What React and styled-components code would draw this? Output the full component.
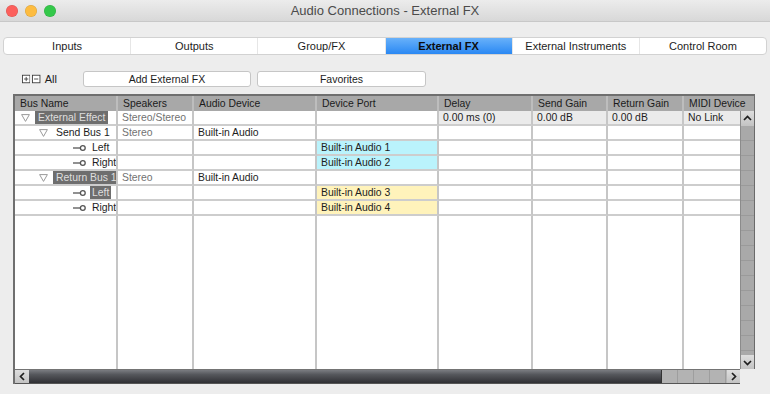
import React from 'react';
import styled, { createGlobalStyle, css } from 'styled-components';

const GlobalStyle = createGlobalStyle`
  html, body {
    margin: 0;
    padding: 0;
  }
  body {
    width: 770px;
    height: 394px;
    overflow: hidden;
    background: #ececec;
    font-family: "Liberation Sans", Arial, Helvetica, sans-serif;
  }
`;

const COLS = [103, 76, 123, 122, 94, 75, 76, 56];
const HEAD_COLS = [103, 76, 123, 122, 94, 75, 76, 71];

const Window = styled.div`
  width: 770px;
  height: 394px;
  display: flex;
  flex-direction: column;
  background: #ededed;
`;

const TitleBar = styled.div`
  height: 22px;
  flex: none;
  box-sizing: border-box;
  display: grid;
  grid-template-columns: 1fr auto 1fr;
  align-items: center;
  background: linear-gradient(#ececec, #d8d8d8);
  border-bottom: 1px solid #c8c8c8;
`;

const Lights = styled.div`
  display: flex;
  gap: 7px;
  padding-left: 6px;
`;

const Light = styled.span`
  width: 12px;
  height: 12px;
  border-radius: 50%;
  background: ${(p) => p.$color};
  box-shadow: inset 0 0 0 0.5px rgba(0, 0, 0, 0.15);
`;

const Title = styled.div`
  font-size: 13px;
  color: #4b4b4b;
`;

const Content = styled.div`
  display: flex;
  flex-direction: column;
  padding: 15px 3px 0;
`;

const Tabs = styled.div`
  display: flex;
  height: 18px;
  box-sizing: border-box;
  background: #fff;
  border: 1px solid #d2d2d2;
  border-radius: 4px;
  overflow: hidden;
`;

const Tab = styled.div`
  flex: 1;
  display: flex;
  align-items: center;
  justify-content: center;
  font-size: 11px;
  color: #1d1d1d;
  & + & {
    border-left: 1px solid #e6e6e6;
  }
  ${(p) =>
    p.$active &&
    css`
      background: linear-gradient(#68b1fa, #2a88f3);
      font-weight: bold;
      color: #0d0d0d;
    `}
`;

const Toolbar = styled.div`
  display: flex;
  align-items: center;
  height: 16px;
  margin-top: 16px;
  padding-left: 19px;
`;

const ExpandAll = styled.div`
  display: flex;
  align-items: center;
  gap: 2px;
  width: 35px;
  margin-right: 26px;
  font-size: 11px;
  color: #1d1d1d;
  span {
    margin-left: 2px;
  }
`;

const ToolButton = styled.div`
  width: ${(p) => p.$w}px;
  height: 16px;
  box-sizing: border-box;
  margin-right: 6px;
  display: flex;
  align-items: center;
  justify-content: center;
  background: #fff;
  border: 1px solid #c6c6c6;
  border-radius: 3px;
  font-size: 10.5px;
  color: #1d1d1d;
`;

const Table = styled.div`
  margin: 7px 0 0 10px;
  display: grid;
  grid-template-columns: 725px 15px;
  grid-template-rows: 15px 258px 15px;
  width: max-content;
  border-top: 2px solid #6f6f6f;
  border-left: 2px solid #6f6f6f;
`;

const HeaderRow = styled.div`
  grid-column: 1 / span 2;
  display: grid;
  grid-template-columns: ${HEAD_COLS.map((w) => `${w}px`).join(' ')};
  background: #a8a8a8;
`;

const HeaderCell = styled.div`
  box-sizing: border-box;
  display: flex;
  align-items: center;
  padding-left: 5px;
  font-size: 10.4px;
  color: #1b1b1b;
  white-space: nowrap;
  border-right: 2px solid #bdbdbd;
  &:last-child {
    border-right: 1px solid #6f6f6f;
  }
`;

const Body = styled.div`
  display: grid;
  grid-template-columns: ${COLS.map((w) => `${w}px`).join(' ')};
  grid-template-rows: repeat(7, 15px) 1fr;
  background: #fff;
`;

const tones = {
  send: '#baf3fc',
  ret: '#fff3bb',
  shade: '#ebebeb',
};

const Cell = styled.div`
  box-sizing: border-box;
  display: flex;
  align-items: center;
  padding-left: 4px;
  font-size: 10.4px;
  white-space: nowrap;
  overflow: hidden;
  color: ${(p) => (p.$muted ? '#727272' : '#1d1d1d')};
  background: ${(p) => tones[p.$tone] || '#fff'};
  border-right: 2px solid #c6c6c6;
  border-bottom: 2px solid #cdcdcd;
  &:nth-child(8n) {
    border-right: none;
  }
  svg {
    flex: none;
  }
`;

const Filler = styled.div`
  border-right: 2px solid #c6c6c6;
  &:last-child {
    border-right: none;
  }
`;

const BusCell = styled(Cell)`
  padding-left: ${(p) => p.$indent}px;
  gap: ${(p) => p.$gap}px;
`;

const Label = styled.span`
  flex: none;
  height: 13px;
  line-height: 13px;
  padding: 0 ${(p) => p.$pad}px;
  ${(p) =>
    p.$selected &&
    css`
      background: #6e6e6e;
      color: #dedede;
    `}
`;

const VScroll = styled.div`
  display: flex;
  flex-direction: column;
  box-sizing: border-box;
  border-left: 1px solid #8b8b8b;
  border-right: 1px solid #6a6a6a;
`;

const ScrollButton = styled.div`
  flex: none;
  width: ${(p) => (p.$w ? `${p.$w}px` : 'auto')};
  height: ${(p) => (p.$h ? `${p.$h}px` : 'auto')};
  display: flex;
  align-items: center;
  justify-content: center;
  background: linear-gradient(#dedede, #c3c3c3);
`;

const VTrack = styled.div`
  flex: 1;
  background: repeating-linear-gradient(
    to bottom,
    #a9a9a9 0 14px,
    #9a9a9a 14px 15px
  );
`;

const HScroll = styled.div`
  display: flex;
  box-sizing: border-box;
  border-top: 1px solid #747474;
  border-bottom: 1px solid #555;
`;

const Thumb = styled.div`
  width: 632px;
  flex: none;
  background: linear-gradient(#7a7c81, #55575c 35%, #2f3034);
`;

const HTrack = styled.div`
  flex: 1;
  background: repeating-linear-gradient(
    to right,
    #b3b3b3 0 15px,
    #9e9e9e 15px 16px
  );
  border-left: 1px solid #333;
`;

const Corner = styled.div`
  background: #ededed;
`;

function Chevron({ dir }) {
  const paths = {
    up: 'M2 7 L5.5 3.5 L9 7',
    down: 'M2 4 L5.5 7.5 L9 4',
    left: 'M7 2 L3.5 5.5 L7 9',
    right: 'M4 2 L7.5 5.5 L4 9',
  };
  return (
    <svg width="11" height="11" viewBox="0 0 11 11">
      <path d={paths[dir]} fill="none" stroke="#1e1e1e" strokeWidth="1.7" />
    </svg>
  );
}

function Disclosure() {
  return (
    <svg width="9" height="8" viewBox="0 0 9 8">
      <path d="M0.6 0.6 H8.4 L4.5 7.4 Z" fill="none" stroke="#9a9a9a" strokeWidth="1" />
    </svg>
  );
}

function Connector() {
  return (
    <svg width="13" height="8" viewBox="0 0 13 8">
      <line x1="0" y1="4" x2="7" y2="4" stroke="#555" strokeWidth="1.3" />
      <circle cx="9.8" cy="4" r="2.4" fill="#fff" stroke="#555" strokeWidth="1.3" />
    </svg>
  );
}

function BoxIcon({ plus }) {
  return (
    <svg width="10" height="10" viewBox="0 0 10 10">
      <rect x="0.5" y="0.5" width="9" height="9" fill="#fff" stroke="#333" />
      <line x1="2.5" y1="5" x2="7.5" y2="5" stroke="#333" />
      {plus && <line x1="5" y1="2.5" x2="5" y2="7.5" stroke="#333" />}
    </svg>
  );
}

const TABS = ['Inputs', 'Outputs', 'Group/FX', 'External FX', 'External Instruments', 'Control Room'];
const HEADERS = ['Bus Name', 'Speakers', 'Audio Device', 'Device Port', 'Delay', 'Send Gain', 'Return Gain', 'MIDI Device'];

const ROWS = [
  { indent: 6, kind: 'group', name: 'External Effect', selected: true, speakers: 'Stereo/Stereo', delay: '0.00 ms (0)', send: '0.00 dB', ret: '0.00 dB', midi: 'No Link', shade: true },
  { indent: 24, kind: 'group', name: 'Send Bus 1', speakers: 'Stereo', device: 'Built-in Audio' },
  { indent: 58, kind: 'leaf', name: 'Left', port: 'Built-in Audio 1', tone: 'send' },
  { indent: 58, kind: 'leaf', name: 'Right', port: 'Built-in Audio 2', tone: 'send' },
  { indent: 24, kind: 'group', name: 'Return Bus 1', selected: true, speakers: 'Stereo', device: 'Built-in Audio' },
  { indent: 58, kind: 'leaf', name: 'Left', selected: true, port: 'Built-in Audio 3', tone: 'ret' },
  { indent: 58, kind: 'leaf', name: 'Right', port: 'Built-in Audio 4', tone: 'ret' },
];

export default function App() {
  return (
    <Window>
      <GlobalStyle />
      <TitleBar>
        <Lights>
          <Light $color="#fc605c" />
          <Light $color="#fdbc40" />
          <Light $color="#34c84a" />
        </Lights>
        <Title>Audio Connections - External FX</Title>
        <div />
      </TitleBar>
      <Content>
        <Tabs>
          {TABS.map((t) => (
            <Tab key={t} $active={t === 'External FX'}>
              {t}
            </Tab>
          ))}
        </Tabs>
        <Toolbar>
          <ExpandAll>
            <BoxIcon plus />
            <BoxIcon />
            <span>All</span>
          </ExpandAll>
          <ToolButton $w={168}>Add External FX</ToolButton>
          <ToolButton $w={169}>Favorites</ToolButton>
        </Toolbar>
        <Table>
          <HeaderRow>
            {HEADERS.map((h) => (
              <HeaderCell key={h}>{h}</HeaderCell>
            ))}
          </HeaderRow>
          <Body>
            {ROWS.map((r, i) => {
              const group = r.kind === 'group';
              return (
                <React.Fragment key={i}>
                  <BusCell $indent={r.indent} $gap={group ? 5 : 4}>
                    {group ? <Disclosure /> : <Connector />}
                    <Label $selected={r.selected} $pad={group ? 3 : 2}>
                      {r.name}
                    </Label>
                  </BusCell>
                  <Cell $muted>{r.speakers}</Cell>
                  <Cell>{r.device}</Cell>
                  <Cell $tone={r.tone}>{r.port}</Cell>
                  <Cell $tone={r.shade && 'shade'}>{r.delay}</Cell>
                  <Cell $tone={r.shade && 'shade'}>{r.send}</Cell>
                  <Cell $tone={r.shade && 'shade'}>{r.ret}</Cell>
                  <Cell $tone={r.shade && 'shade'}>{r.midi}</Cell>
                </React.Fragment>
              );
            })}
            {COLS.map((w, i) => (
              <Filler key={`f${i}`} />
            ))}
          </Body>
          <VScroll>
            <ScrollButton $h={15}>
              <Chevron dir="up" />
            </ScrollButton>
            <VTrack />
            <ScrollButton $h={14}>
              <Chevron dir="down" />
            </ScrollButton>
          </VScroll>
          <HScroll>
            <ScrollButton $w={14}>
              <Chevron dir="left" />
            </ScrollButton>
            <Thumb />
            <HTrack />
            <ScrollButton $w={13}>
              <Chevron dir="right" />
            </ScrollButton>
          </HScroll>
          <Corner />
        </Table>
      </Content>
    </Window>
  );
}
